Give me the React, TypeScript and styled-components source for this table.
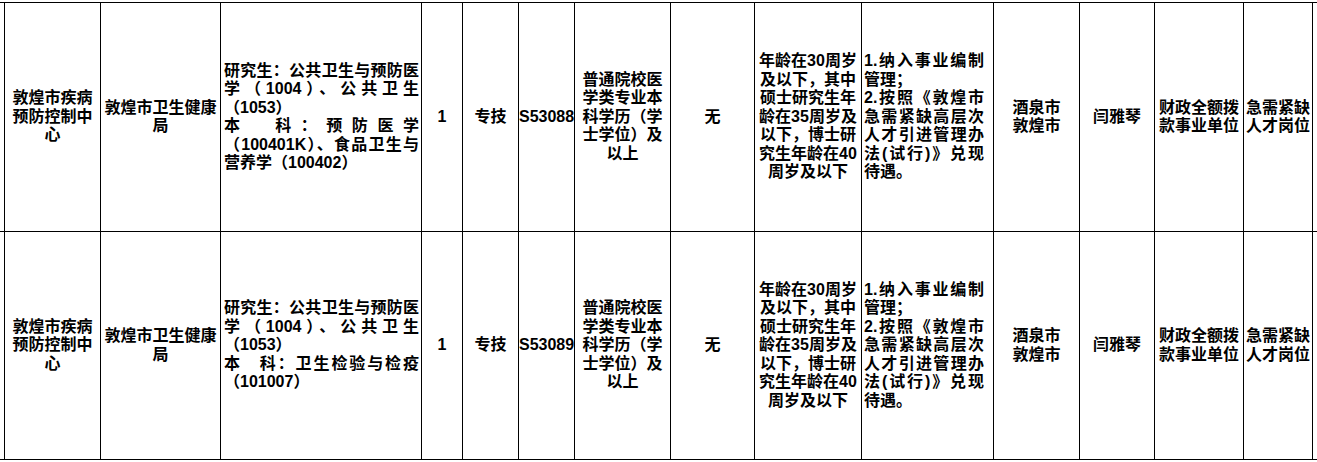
import React from 'react';
import styled, { createGlobalStyle } from 'styled-components';

const GlobalStyle = createGlobalStyle`
  html,
  body {
    margin: 0;
    background: #fff;
    overflow: hidden;
  }
`;

type Align = 'center' | 'justify';

interface ColSpec {
  width: number;
  pad: string;
  align?: Align;
  nowrap?: boolean;
}

// widths are the inner widths between the 1px grid lines
const COLS: ColSpec[] = [
  { width: 95, pad: '0 4px' },
  { width: 119, pad: '0 2px' },
  { width: 200, pad: '0 2px 0 3px', align: 'justify' },
  { width: 40, pad: '0' },
  { width: 55, pad: '0' },
  { width: 55, pad: '0', nowrap: true },
  { width: 95, pad: '0 3px' },
  { width: 83, pad: '0' },
  { width: 106, pad: '0 2px' },
  { width: 131, pad: '0 9px 0 2px', align: 'justify' },
  { width: 85, pad: '0' },
  { width: 74, pad: '0' },
  { width: 88, pad: '0 2px' },
  { width: 68, pad: '0 1px' },
];

const TRACKS = ['4px', ...COLS.map((c) => `${c.width}px`), '4px'].join(' ');

const Sheet = styled.div`
  display: grid;
  grid-template-columns: ${TRACKS};
  grid-template-rows: 228px 227px;
  gap: 1px;
  padding: 1px 0;
  margin-top: 2px;
  width: 1317px;
  background: #000;
  font-family: 'Liberation Sans', 'Noto Sans CJK SC', sans-serif;
  font-size: 16px;
  line-height: 18.5px;
  font-weight: 700;
  color: #000;
`;

// the table runs on past both edges of the view
const EdgeCell = styled.div`
  background: #fff;
`;

const Cell = styled.div<{ $pad: string; $align: Align; $nowrap?: boolean }>`
  background: #fff;
  display: flex;
  flex-direction: column;
  justify-content: center;
  min-width: 0;
  padding: ${(p) => p.$pad};
  text-align: ${(p) => p.$align};
  white-space: ${(p) => (p.$nowrap ? 'nowrap' : 'normal')};
`;

const Para = styled.p`
  margin: 0;
`;

const majorRow1 = (
  <>
    <Para>研究生：公共卫生与预防医学（1004）、公共卫生（1053）</Para>
    <Para>本　科：预防医学（100401K）、食品卫生与营养学（100402）</Para>
  </>
);

const majorRow2 = (
  <>
    <Para>研究生：公共卫生与预防医学（1004）、公共卫生（1053）</Para>
    <Para>本　科：卫生检验与检疫（101007）</Para>
  </>
);

const treatment = (
  <>
    <Para>1.纳入事业编制管理；</Para>
    <Para>2.按照《敦煌市急需紧缺高层次人才引进管理办法(试行)》兑现待遇。</Para>
  </>
);

const makeRow = (major: React.ReactNode, code: string): React.ReactNode[] => [
  '敦煌市疾病预防控制中心',
  '敦煌市卫生健康局',
  major,
  '1',
  '专技',
  code,
  '普通院校医学类专业本科学历（学士学位）及以上',
  '无',
  '年龄在30周岁及以下，其中硕士研究生年龄在35周岁及以下，博士研究生年龄在40周岁及以下',
  treatment,
  (
    <>
      酒泉市
      <br />
      敦煌市
    </>
  ),
  '闫雅琴',
  '财政全额拨款事业单位',
  '急需紧缺人才岗位',
];

const ROWS = [makeRow(majorRow1, 'S53088'), makeRow(majorRow2, 'S53089')];

export default function App() {
  return (
    <>
      <GlobalStyle />
      <Sheet lang="zh-CN">
        {ROWS.map((row, r) => (
          <React.Fragment key={r}>
            <EdgeCell />
            {row.map((content, i) => {
              const col = COLS[i];
              return (
                <Cell key={i} $pad={col.pad} $align={col.align ?? 'center'} $nowrap={col.nowrap}>
                  {typeof content === 'string' ? <Para>{content}</Para> : content}
                </Cell>
              );
            })}
            <EdgeCell />
          </React.Fragment>
        ))}
      </Sheet>
    </>
  );
}
